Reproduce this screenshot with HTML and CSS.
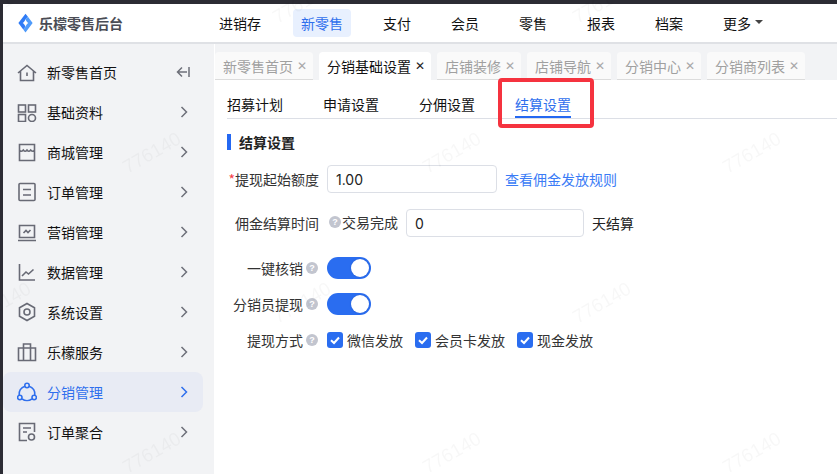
FILE: index.html
```html
<!DOCTYPE html>
<html lang="zh-CN">
<head>
<meta charset="utf-8">
<title>乐檬零售后台</title>
<link rel="stylesheet" href="styles.css">
</head>
<body>
<div class="app">
  <header class="topbar">
    <div class="brand">
      <svg class="brand-logo" viewBox="0 0 16 20"><path fill="#2f7bf6" fill-rule="evenodd" d="M8 0 L10.6 3.4 L8 6 C7.5 7.6 6.6 9 5 10 C6.6 11 7.5 12.4 8 14 L5.6 16.8 L0.4 10 Z"/><path fill="#4f9bfa" d="M8 20 L5.6 16.8 L8 14 C8.5 12.4 9.4 11 11 10 C9.4 9 8.5 7.6 8 6 L10.6 3.4 L15.6 10 Z"/></svg>
      <span class="brand-name">乐檬零售后台</span>
    </div>
    <nav class="mainnav">
      <a class="mainnav-item">进销存</a>
      <a class="mainnav-item is-active">新零售</a>
      <a class="mainnav-item">支付</a>
      <a class="mainnav-item">会员</a>
      <a class="mainnav-item">零售</a>
      <a class="mainnav-item">报表</a>
      <a class="mainnav-item">档案</a>
      <a class="mainnav-item">更多<i class="caret"></i></a>
    </nav>
  </header>
  <div class="body">
    <aside class="sidebar">
      <div class="side-item">
        <svg class="side-icon" viewBox="0 0 20 20"><path d="M1 11 L10 3.5 L19 11 M3.5 9 V18.5 H16.5 V9 M10 10.5 V14"/></svg>
        <span class="side-label">新零售首页</span>
        <svg class="side-collapse" viewBox="0 0 14 12"><path d="M13 1 V11 M11 6 H1.5 M6 1.5 L1.5 6 L6 10.5"/></svg>
      </div>
      <div class="side-item">
        <svg class="side-icon" viewBox="0 0 20 20"><rect x="1.5" y="3" width="7" height="7"/><rect x="11.5" y="3" width="7" height="7"/><rect x="1.5" y="12.5" width="7" height="7"/><circle cx="15" cy="16" r="3.5"/></svg>
        <span class="side-label">基础资料</span>
        <svg class="side-chev" viewBox="0 0 8 12"><path d="M1.5 1 L6.5 6 L1.5 11"/></svg>
      </div>
      <div class="side-item">
        <svg class="side-icon" viewBox="0 0 20 20"><path d="M2.5 2.5 H17.5 V18.5 H2.5 Z M2.5 8 Q4 10.5 6.3 8 Q8.2 10.5 10 8 Q11.8 10.5 13.7 8 Q16 10.5 17.5 8"/></svg>
        <span class="side-label">商城管理</span>
        <svg class="side-chev" viewBox="0 0 8 12"><path d="M1.5 1 L6.5 6 L1.5 11"/></svg>
      </div>
      <div class="side-item">
        <svg class="side-icon" viewBox="0 0 20 20"><rect x="2" y="1.5" width="16" height="17" rx="1"/><path d="M6 7.5 H14 M6 13 H14"/></svg>
        <span class="side-label">订单管理</span>
        <svg class="side-chev" viewBox="0 0 8 12"><path d="M1.5 1 L6.5 6 L1.5 11"/></svg>
      </div>
      <div class="side-item">
        <svg class="side-icon" viewBox="0 0 20 20"><path d="M2.5 15.5 V3.5 H17.5 V15.5 Z M1 18.5 H19 M6.5 11 L9 8.5 L11 10.5 L13.5 8"/></svg>
        <span class="side-label">营销管理</span>
        <svg class="side-chev" viewBox="0 0 8 12"><path d="M1.5 1 L6.5 6 L1.5 11"/></svg>
      </div>
      <div class="side-item">
        <svg class="side-icon" viewBox="0 0 20 20"><path d="M2.5 2 V18 H18 M5 14 L9 10 L11.5 12 L16.5 7.5"/></svg>
        <span class="side-label">数据管理</span>
        <svg class="side-chev" viewBox="0 0 8 12"><path d="M1.5 1 L6.5 6 L1.5 11"/></svg>
      </div>
      <div class="side-item">
        <svg class="side-icon" viewBox="0 0 20 20"><path d="M10 1.5 L17.5 5.7 V14.3 L10 18.5 L2.5 14.3 V5.7 Z"/><circle cx="10" cy="10" r="3"/></svg>
        <span class="side-label">系统设置</span>
        <svg class="side-chev" viewBox="0 0 8 12"><path d="M1.5 1 L6.5 6 L1.5 11"/></svg>
      </div>
      <div class="side-item">
        <svg class="side-icon" viewBox="0 0 20 20"><path d="M1.5 6 H18.5 V18.5 H1.5 Z M6.5 6 V2 H13.5 V6 M6.5 6 V18.5 M13.5 6 V18.5"/></svg>
        <span class="side-label">乐檬服务</span>
        <svg class="side-chev" viewBox="0 0 8 12"><path d="M1.5 1 L6.5 6 L1.5 11"/></svg>
      </div>
      <div class="side-item is-active">
        <svg class="side-icon" viewBox="0 0 20 20"><circle cx="10" cy="3.5" r="2.2"/><circle cx="2.8" cy="15.5" r="2.2"/><circle cx="17.2" cy="15.5" r="2.2"/><path d="M7.9 4.2 A 8 8 0 0 0 2.2 13.3 M12.1 4.2 A 8 8 0 0 1 17.8 13.3 M5 16.8 A 8 8 0 0 0 15 16.8"/></svg>
        <span class="side-label">分销管理</span>
        <svg class="side-chev" viewBox="0 0 8 12"><path d="M1.5 1 L6.5 6 L1.5 11"/></svg>
      </div>
      <div class="side-item">
        <svg class="side-icon" viewBox="0 0 20 20"><path d="M10 18.5 H2.5 V1.5 H17.5 V10 M6 6 H14 M6 10 H10"/><circle cx="14.5" cy="15" r="3"/></svg>
        <span class="side-label">订单聚合</span>
        <svg class="side-chev" viewBox="0 0 8 12"><path d="M1.5 1 L6.5 6 L1.5 11"/></svg>
      </div>
    </aside>
    <main class="main">
      <div class="tabbar">
        <div class="tab">新零售首页<span class="tab-x">✕</span></div>
        <div class="tab is-active">分销基础设置<span class="tab-x">✕</span></div>
        <div class="tab">店铺装修<span class="tab-x">✕</span></div>
        <div class="tab">店铺导航<span class="tab-x">✕</span></div>
        <div class="tab">分销中心<span class="tab-x">✕</span></div>
        <div class="tab">分销商列表<span class="tab-x">✕</span></div>
      </div>
      <div class="content">
        <div class="subtabs">
          <a class="subtab">招募计划</a>
          <a class="subtab">申请设置</a>
          <a class="subtab">分佣设置</a>
          <a class="subtab is-active">结算设置</a>
        </div>
        <h2 class="section-title">结算设置</h2>
        <form class="form">
          <div class="row row-first">
            <label class="row-label"><span class="req">*</span>提现起始额度</label>
            <input class="input input-wide" type="text" value="1.00">
            <a class="link">查看佣金发放规则</a>
          </div>
          <div class="row row-time">
            <label class="row-label">佣金结算时间</label>
            <span class="help help-inline">?</span>
            <span class="inline-text">交易完成</span>
            <input class="input input-days" type="text" value="0">
            <span class="suffix">天结算</span>
          </div>
          <div class="row row-switch-a">
            <label class="row-label">一键核销<span class="help">?</span></label>
            <span class="switch"></span>
          </div>
          <div class="row row-switch-b">
            <label class="row-label">分销员提现<span class="help">?</span></label>
            <span class="switch"></span>
          </div>
          <div class="row row-checks">
            <label class="row-label">提现方式<span class="help">?</span></label>
            <span class="check"><svg class="check-box" viewBox="0 0 16 16"><rect width="16" height="16" rx="3"/><path d="M4 8.2 L7 11 L12 5.5"/></svg>微信发放</span>
            <span class="check"><svg class="check-box" viewBox="0 0 16 16"><rect width="16" height="16" rx="3"/><path d="M4 8.2 L7 11 L12 5.5"/></svg>会员卡发放</span>
            <span class="check"><svg class="check-box" viewBox="0 0 16 16"><rect width="16" height="16" rx="3"/><path d="M4 8.2 L7 11 L12 5.5"/></svg>现金发放</span>
          </div>
        </form>
      </div>
    </main>
  </div>
</div>
<div class="callout"></div>
<div class="watermarks">
  <span>776140</span><span></span><span>776140</span><span></span><span>776140</span><span></span>
  <span></span><span>776140</span><span></span><span>776140</span><span></span><span>776140</span>
  <span>776140</span><span></span><span>776140</span><span></span><span>776140</span><span></span>
  <span></span><span>776140</span><span></span><span>776140</span><span></span><span>776140</span>
</div>
</body>
</html>
```
FILE: styles.css
```css
* { box-sizing: border-box; }
html, body { margin: 0; height: 100%; overflow: hidden; }
body {
  background: #2c2c34;
  padding: 4px 0 0 3px;
  font-family: "Noto Sans CJK SC", "Liberation Sans", sans-serif;
  font-size: 14px;
  color: #111;
}
.app { height: 470px; background: #fff; display: flex; flex-direction: column; }

.topbar {
  height: 40px;
  flex: none;
  display: flex;
  align-items: center;
  background: #fff;
  border-bottom: 2px solid #dfe1e5;
}
.brand { width: 208px; flex: none; display: flex; align-items: center; padding-left: 15px; gap: 6px; }
.brand-logo { width: 15px; height: 20px; flex: none; }
.brand-name { font-weight: 700; font-size: 14px; color: #4a4c55; line-height: 20px; }
.mainnav { display: flex; gap: 24px; align-items: center; }
.mainnav-item { height: 28px; line-height: 28px; padding: 0 8px; border-radius: 4px; white-space: nowrap; display: flex; align-items: center; }
.mainnav-item.is-active { background: #e8f0fe; color: #2f6fed; }
.caret { width: 0; height: 0; margin-left: 4px; margin-bottom: 2px; border: 4px solid transparent; border-top: 4px solid #444; border-bottom: 0; }

.body { flex: 1; display: flex; min-height: 0; }
.sidebar { width: 211px; flex: none; background: #f2f3f5; padding-top: 8px; display: flex; flex-direction: column; }
.side-item { height: 40px; width: 200px; display: flex; align-items: center; padding-left: 14px; border-radius: 8px; flex: none; position: relative; }
.side-icon { width: 20px; height: 20px; flex: none; fill: none; stroke: #686a75; stroke-width: 1.6; }
.side-label { margin-left: 10px; line-height: 20px; flex: 1; }
.side-chev { width: 8px; height: 12px; flex: none; margin-right: 15px; fill: none; stroke: #6e7079; stroke-width: 1.5; }
.side-collapse { width: 14px; height: 12px; flex: none; margin-right: 13px; fill: none; stroke: #6e7079; stroke-width: 1.5; }
.side-item.is-active { background: #e8ebf4; color: #2f6fed; }
.side-item.is-active .side-icon, .side-item.is-active .side-chev { stroke: #2f6fed; }

.main { flex: 1; min-width: 0; display: flex; flex-direction: column; margin-left: 1px; }
.tabbar { height: 36px; flex: none; background: #f2f3f5; padding-top: 8px; display: flex; gap: 6px; overflow: hidden; }
.tab {
  height: 28px;
  padding: 0 8px;
  display: flex;
  align-items: center;
  gap: 4px;
  background: #fafafa;
  color: #a0a0a0;
  border-radius: 4px 4px 0 0;
  border-bottom: 1px solid #dcdcdc;
  white-space: nowrap;
  flex: none;
}
.tab-x { width: 10px; margin-right: -2px; font-size: 12px; line-height: 1; font-family: "DejaVu Sans", sans-serif; color: #a8a8a8; font-weight: 700; }
.tab.is-active { background: #fff; color: #111; border-bottom-color: #fff; }
.tab.is-active .tab-x { color: #222; }

.content { flex: 1; background: #fff; padding-left: 12px; min-height: 0; }
.subtabs { height: 39px; display: flex; gap: 40px; border-bottom: 1px solid #dcdfe6; }
.subtab { height: 38px; padding-top: 14px; line-height: 20px; }
.subtab.is-active { color: #2f6fed; border-bottom: 2px solid #2468f2; }

.section-title {
  margin: 15px 0 0;
  height: 16px;
  border-left: 4px solid #2468f2;
  padding-left: 8px;
  font-size: 14px;
  font-weight: 700;
  line-height: 16px;
  color: #222;
}
.form { margin-top: 15px; }
.row { display: flex; align-items: center; }
.row-first { height: 28px; }
.row-time { height: 28px; margin-top: 16px; }
.row-switch-a { height: 22px; margin-top: 20px; }
.row-switch-b { height: 22px; margin-top: 14px; }
.row-checks { height: 22px; margin-top: 14px; }
.row-label { width: 92px; flex: none; display: flex; align-items: center; justify-content: flex-end; color: #333; white-space: nowrap; }
.req { color: #f5424a; margin-left: -2px; }
.input {
  height: 28px;
  border: 1px solid #dcdfe6;
  border-radius: 4px;
  padding: 0 8px;
  font: 14px "Inter", "Liberation Sans", sans-serif;
  color: #222;
  background: #fff;
  outline: none;
}
.input-wide { width: 170px; margin-left: 8px; }
.input-days { width: 178px; margin-left: 8px; }
.link { margin-left: 8px; color: #3b7cf6; white-space: nowrap; }
.help {
  width: 12px; height: 12px; flex: none;
  border-radius: 50%;
  background: #c2c5cf;
  color: #fff;
  font: 700 9px/12px "Liberation Sans", sans-serif;
  text-align: center;
  margin-left: 3px;
  margin-right: 1px;
}
.help-inline { margin-left: 10px; margin-right: 0; margin-top: -2px; }
.inline-text { margin-left: 1px; margin-top: -3px; white-space: nowrap; color: #333; }
.suffix { margin-left: 8px; color: #222; }
.switch { width: 44px; height: 22px; border-radius: 11px; background: #2a6df0; margin-left: 8px; display: flex; align-items: center; justify-content: flex-end; padding-right: 2px; flex: none; }
.switch::after { content: ""; width: 18px; height: 18px; border-radius: 50%; background: #fff; box-shadow: 0 0 2px rgba(0, 0, 0, .15); }
.check { display: flex; align-items: center; gap: 4px; margin-left: 12px; color: #333; white-space: nowrap; }
.row-label + .check { margin-left: 8px; }
.check-box { width: 16px; height: 16px; flex: none; fill: #2a6df0; }
.check-box path { fill: none; stroke: #fff; stroke-width: 2; }

.callout {
  position: fixed;
  left: 498px; top: 78px;
  width: 96px; height: 50px;
  border: 4px solid #f5333f;
  border-radius: 4px;
  pointer-events: none;
}
.watermarks {
  position: fixed;
  left: -73px; top: -72px;
  display: grid;
  grid-template-columns: repeat(6, 150px);
  grid-auto-rows: 150px;
  pointer-events: none;
}
.watermarks span {
  display: flex; align-items: center; justify-content: center;
  font: 19px "Liberation Sans", sans-serif;
  color: rgba(0, 0, 0, .03);
  transform: rotate(-30deg);
}
```
